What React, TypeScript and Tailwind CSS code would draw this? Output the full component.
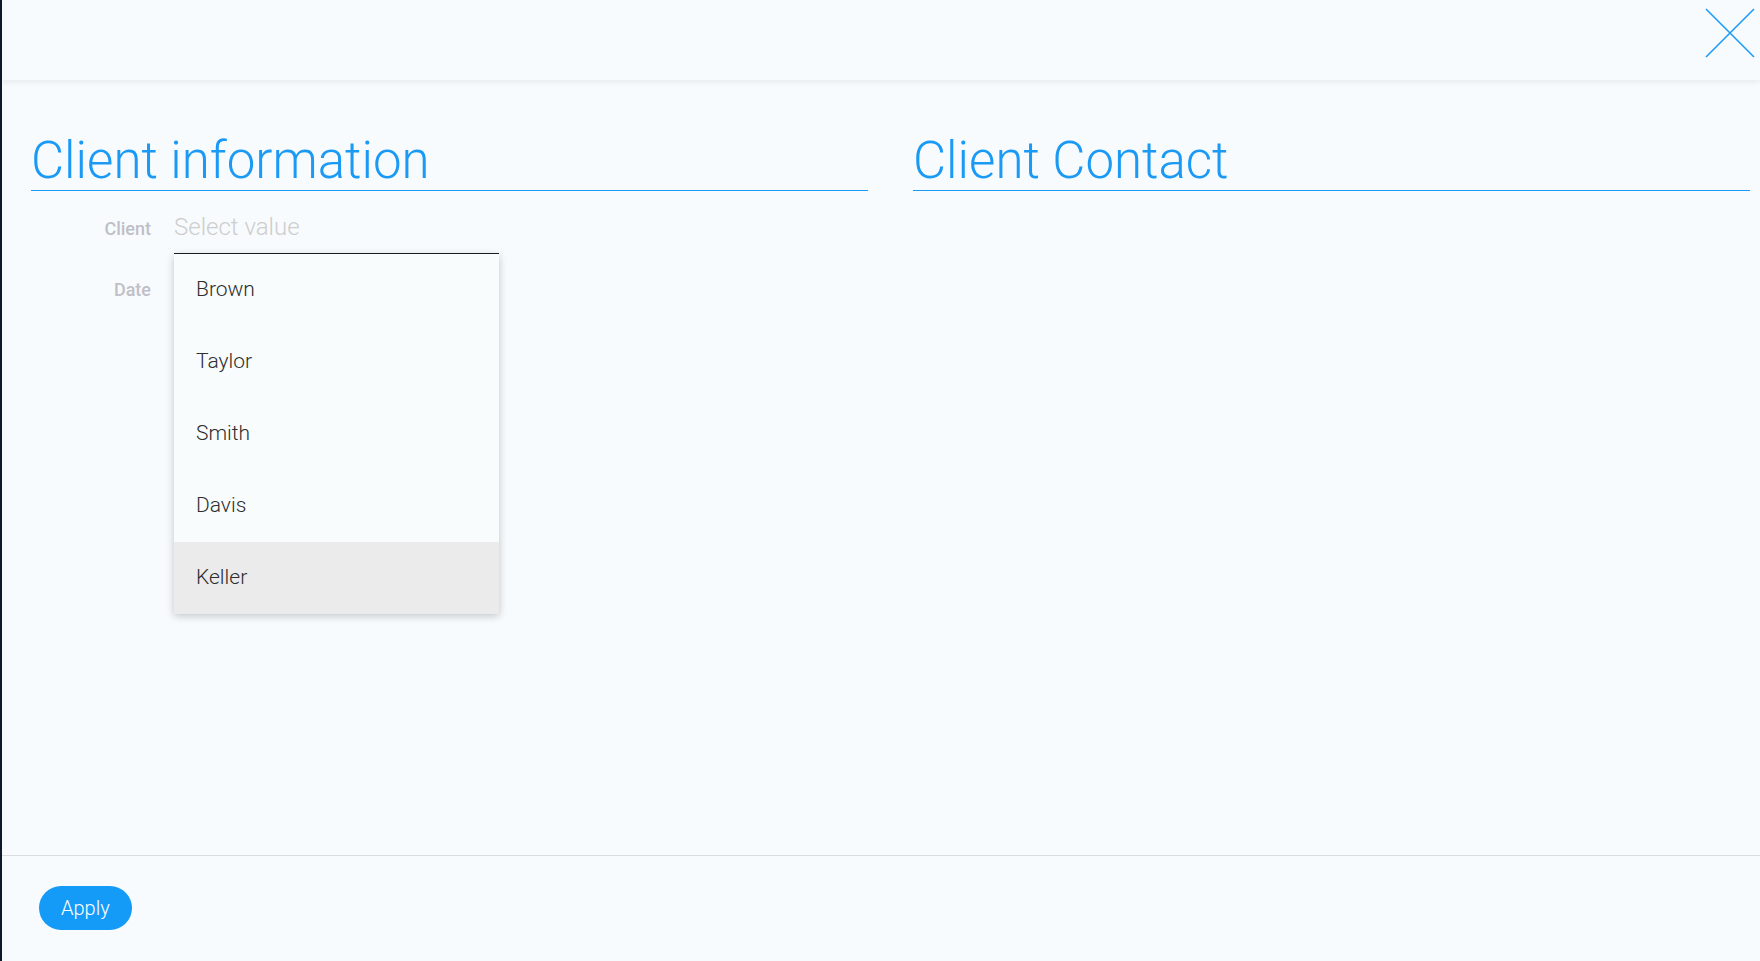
import { useState } from "react";

const clients = ["Brown", "Taylor", "Smith", "Davis", "Keller"];

function CloseIcon() {
  return (
    <svg width="50" height="50" viewBox="0 0 50 50" fill="none">
      <path d="M1 1 L49 49 M49 1 L1 49" stroke="#1e9bf5" strokeWidth="1.6" />
    </svg>
  );
}

export default function App() {
  const [hovered] = useState("Keller");

  return (
    <div
      className="h-screen flex flex-col bg-[#f7fbfd] border-l-2 border-[#0e1a2c] overflow-hidden"
      style={{ fontFamily: "Roboto, 'Noto Sans', sans-serif" }}
    >
      {/* Header */}
      <header className="h-[80px] shrink-0 flex justify-end items-start pt-[8px] pr-[5px] bg-[#f7fbfd] shadow-[0_2px_6px_rgba(20,30,60,0.08)] relative z-10">
        <button className="w-[50px] h-[50px]">
          <CloseIcon />
        </button>
      </header>

      {/* Body */}
      <main className="flex-1 grid grid-cols-2 gap-[45px] pl-[29px] pr-[10px] pt-[56px]">
        <section>
          <h2 className="text-[51px] leading-[49px] font-light text-[#1a9af5] pb-[5px] border-b border-[#1a9af5]">
            Client information
          </h2>

          <div className="mt-[18px] flex items-baseline">
            <span className="w-[120px] text-right text-[18px] font-medium text-[#c0bfc7]">Client</span>
            <div className="relative ml-[23px] w-[325px]">
              <div className="h-[45px] border-b border-[#1b1d22] text-[24px] leading-[36px] font-light text-[#cdcdcd]">
                Select value
              </div>
              <ul className="absolute left-0 right-0 top-[45px] bg-[#f8fcfd] shadow-[0_2px_8px_rgba(0,0,0,0.22)] z-20">
                {clients.map((c) => (
                  <li
                    key={c}
                    className={`h-[72px] flex items-center pl-[22px] text-[21px] font-light text-[#2e2e2e] ${
                      c === hovered ? "bg-[#ebebeb]" : ""
                    }`}
                  >
                    {c}
                  </li>
                ))}
              </ul>
            </div>
          </div>

          <div className="mt-[22px] flex items-baseline">
            <span className="w-[120px] text-right text-[18px] font-medium text-[#c0bfc7]">Date</span>
          </div>
        </section>

        <section>
          <h2 className="text-[51px] leading-[49px] font-light text-[#1a9af5] pb-[5px] border-b border-[#1a9af5]">
            Client Contact
          </h2>
        </section>
      </main>

      {/* Footer */}
      <footer className="h-[106px] shrink-0 border-t border-[#dcdde0] pt-[30px] pl-[37px]">
        <button className="h-[44px] px-[22px] rounded-full bg-[#149bf8] text-white text-[20px] font-light">
          Apply
        </button>
      </footer>
    </div>
  );
}
